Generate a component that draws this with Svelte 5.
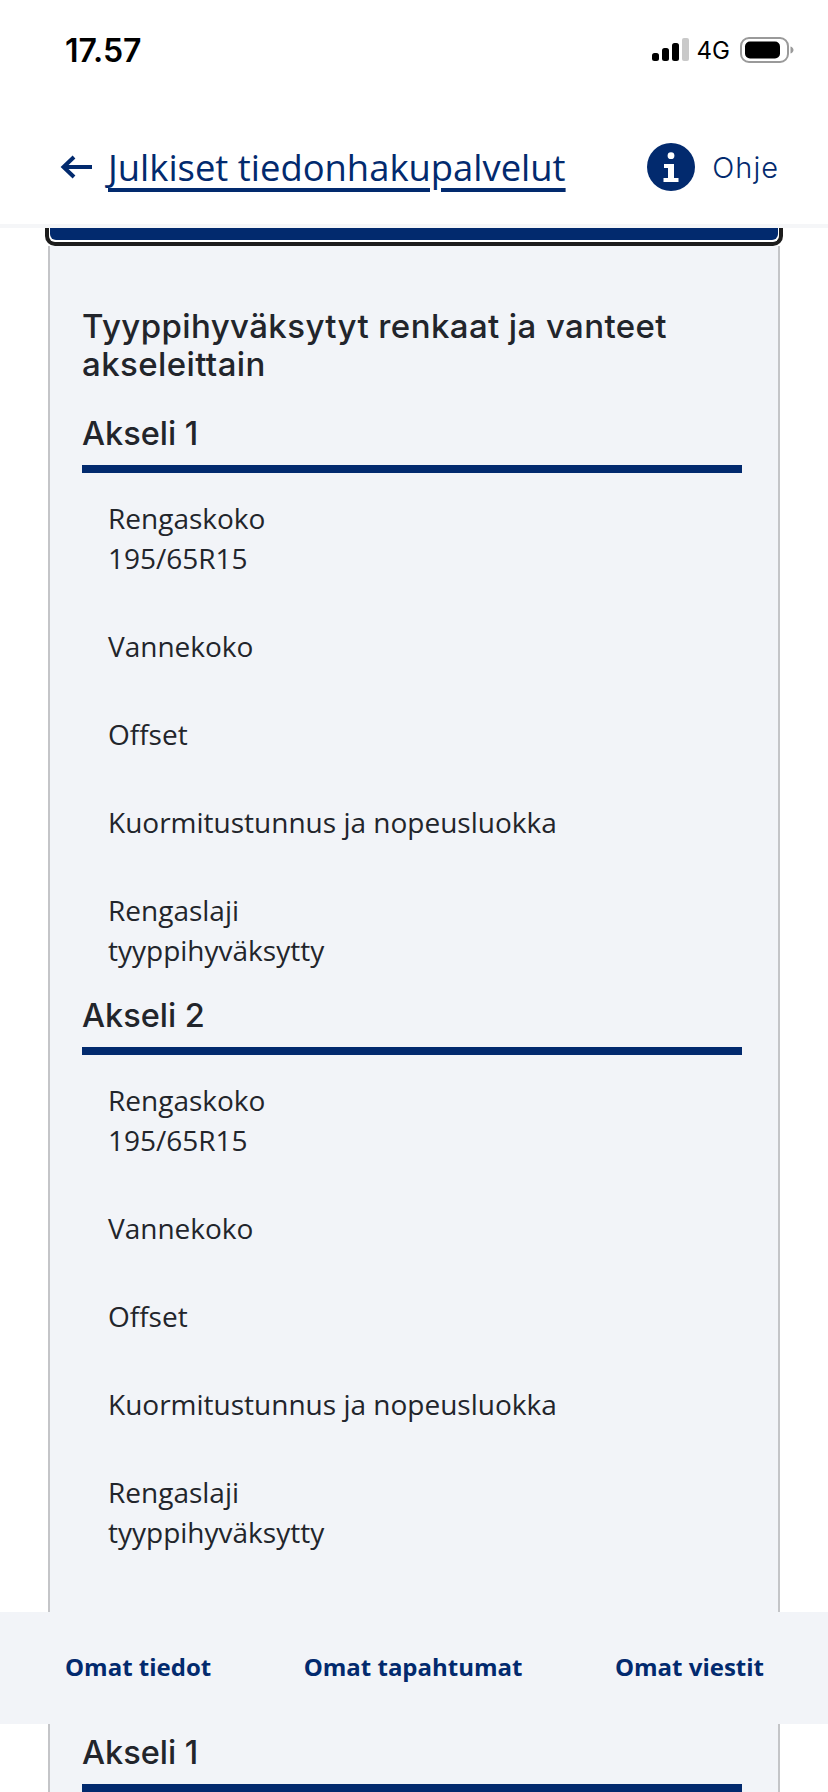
<script lang="ts">
	const rows = [
		{ label: 'Rengaskoko', value: '195/65R15' },
		{ label: 'Vannekoko', value: '' },
		{ label: 'Offset', value: '' },
		{ label: 'Kuormitustunnus ja nopeusluokka', value: '' },
		{ label: 'Rengaslaji', value: 'tyyppihyväksytty' },
	];
	const axles = ['Akseli 1', 'Akseli 2'];
</script>

<div class="screen">
	<header class="top">
		<div class="status">
			<span class="time">17.57</span>
			<div class="status-right">
				<svg class="signal" width="37" height="24" viewBox="0 0 37 24" aria-hidden="true">
					<rect x="0" y="15" width="7" height="8" rx="2.500" fill="#000" />
					<rect x="10" y="10" width="7" height="13" rx="2.500" fill="#000" />
					<rect x="20" y="5" width="7" height="18" rx="2.500" fill="#000" />
					<rect x="30" y="0" width="7" height="23" rx="2" fill="#c9c9c9" />
				</svg>
				<span class="net">4G</span>
				<svg class="battery" width="54" height="26" viewBox="0 0 54 26" aria-hidden="true">
					<rect x="1" y="1" width="47" height="24" rx="8" fill="none" stroke="#9a9a9a" stroke-width="2" />
					<rect x="5" y="4.500" width="35" height="17" rx="5" fill="#000" />
					<path d="M50.500 9.500c2 .6 3 2 3 3.500s-1 2.900-3 3.500z" fill="#9a9a9a" />
				</svg>
			</div>
		</div>
		<nav class="crumb">
			<svg class="arrow" width="34" height="26" viewBox="0 0 34 26" aria-hidden="true">
				<path d="M32 13H4M14 3 3.500 13 14 23" fill="none" stroke="#022a6e" stroke-width="4" />
			</svg>
			<a class="back" href="#top">Julkiset tiedonhakupalvelut</a>
			<div class="help">
				<svg width="48" height="48" viewBox="0 0 48 48" aria-hidden="true">
					<circle cx="24" cy="24" r="24" fill="#022a6e" />
					<circle cx="24" cy="12.700" r="3.400" fill="#fff" />
					<path d="M17 21h10v14h4.500v4h-15v-4H21V25h-4z" fill="#fff" />
				</svg>
				<span>Ohje</span>
			</div>
		</nav>
	</header>

	<main class="content">
		<div class="button-edge"><div class="button-fill"></div></div>
		<section class="panel">
			<h2>Tyyppihyväksytyt renkaat ja vanteet akseleittain</h2>
			{#each axles as axle}
				<h3>{axle}</h3>
				<dl>
					{#each rows as row}
						<div class="row">
							<dt>{row.label}</dt>
							{#if row.value}<dd>{row.value}</dd>{/if}
						</div>
					{/each}
				</dl>
			{/each}
			<h3 class="next">Akseli 1</h3>
		</section>
	</main>

	<footer class="bottom">
		<a href="#top">Omat tiedot</a>
		<a href="#top">Omat tapahtumat</a>
		<a href="#top">Omat viestit</a>
	</footer>
</div>

<style>
	:global(body) {
		margin: 0;
		background: #fff;
	}

	.screen {
		position: relative;
		width: 828px;
		height: 1792px;
		overflow: hidden;
		background: #fff;
		font-family: 'Open Sans', sans-serif;
		color: #22252b;
	}

	.top {
		height: 228px;
		box-sizing: border-box;
		border-bottom: 4px solid #f5f6f8;
		padding: 0 49px 0 60px;
	}

	.status {
		display: flex;
		align-items: center;
		justify-content: space-between;
		height: 100px;
		margin-right: -15px;
	}

	.time {
		font-family: Inter, sans-serif;
		font-size: 32px;
		font-weight: 600;
		color: #000;
		margin-left: 5px;
	}

	.status-right {
		display: flex;
		align-items: center;
		gap: 8px;
	}

	.net {
		font-family: Inter, sans-serif;
		font-size: 24px;
		color: #000;
		margin-right: 2px;
	}

	.crumb {
		display: flex;
		align-items: center;
		margin-top: 41px;
	}

	.arrow {
		margin-right: 14px;
	}

	.back {
		font-size: 36.400px;
		line-height: 52px;
		color: #022a6e;
		text-decoration: underline;
		text-decoration-thickness: 4px;
		text-underline-offset: 7px;
	}

	.help {
		display: flex;
		align-items: center;
		gap: 17px;
		margin-left: auto;
		font-family: Inter, sans-serif;
		font-size: 29px;
		font-weight: 300;
		letter-spacing: 1px;
		color: #022a6e;
	}

	.content {
		padding: 0 48px;
	}

	.button-edge {
		box-sizing: border-box;
		height: 18px;
		margin: 0 -3px;
		border: 4px solid #1c1c1c;
		border-top: 0;
		border-radius: 0 0 10px 10px;
		padding: 0 1px 2px;
	}

	.button-fill {
		height: 12px;
		background: #022a6e;
		border-radius: 0 0 6px 6px;
	}

	.panel {
		box-sizing: border-box;
		height: 1600px;
		background: #f2f4f8;
		border: solid #c4c5c8;
		border-width: 0 2px;
		padding: 61px 36px 0 32px;
	}

	h2 {
		margin: 0 0 29px;
		font-family: Inter, sans-serif;
		font-size: 33px;
		line-height: 38px;
		font-weight: 500;
		letter-spacing: 0.4px;
		max-width: 640px;
	}

	h3 {
		margin: 0;
		padding-bottom: 9px;
		border-bottom: 8px solid #022a6e;
		font-family: Inter, sans-serif;
		font-size: 32.500px;
		line-height: 44px;
		font-weight: 500;
	}

	dl {
		margin: 25px 0 0 26px;
	}

	.row {
		font-size: 28px;
		line-height: 40px;
		margin-bottom: 48px;
	}

	.row:last-child {
		margin-bottom: 24px;
	}

	dt,
	dd {
		margin: 0;
	}

	.next {
		margin-top: 179px;
	}

	.bottom {
		position: absolute;
		left: 0;
		right: 0;
		top: 1612px;
		height: 112px;
		box-sizing: border-box;
		padding: 0 64px 4px 65px;
		display: flex;
		align-items: center;
		justify-content: space-between;
		background: #f2f4f8;
	}

	.bottom a {
		font-size: 24px;
		font-weight: 700;
		color: #022a6e;
		text-decoration: none;
	}
</style>
